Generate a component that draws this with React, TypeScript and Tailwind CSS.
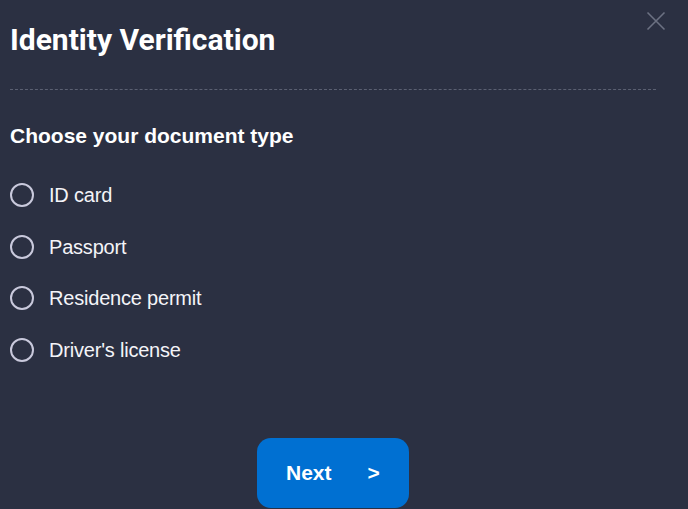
import React from "react";

const options = ["ID card", "Passport", "Residence permit", "Driver's license"];

export default function App() {
  return (
    <div className="relative w-[688px] h-[509px] overflow-hidden bg-[#2b3042]">
      <button className="absolute left-[646px] top-[11px] w-[20px] h-[20px]" aria-label="Close">
        <svg width="20" height="20" viewBox="0 0 20 20" fill="none">
          <path d="M1.5 1.5 L18.5 18.5 M18.5 1.5 L1.5 18.5" stroke="#6c7182" strokeWidth="1.6" />
        </svg>
      </button>
      <div className="ml-[10px] w-[646px] flex flex-col">
        <h1 className="pt-[22px] text-[30px] leading-[36px] font-bold text-white font-['Roboto',sans-serif]">
          Identity Verification
        </h1>
        <div className="mt-[31px] border-t border-dashed border-[#5b6072]" />
        <h2 className="mt-[34px] text-[21px] leading-[24px] font-bold text-white font-['Liberation_Sans',Arial,sans-serif]">
          Choose your document type
        </h2>
        <div className="mt-[21px] flex flex-col">
          {options.map((o) => (
            <label key={o} className="h-[51.7px] flex items-center">
              <span className="w-6 h-6 rounded-full border-2 border-[#c9c9dc]" />
              <span className="ml-[15px] text-[20px] leading-[24px] tracking-[-0.2px] text-[#f4f4f8] font-['Liberation_Sans',Arial,sans-serif]">
                {o}
              </span>
            </label>
          ))}
        </div>
        <div className="mt-[62px] flex justify-center">
          <button className="w-[152px] h-[70px] rounded-[14px] bg-[#0070d2] flex items-center pl-[29px] text-white text-[21px] font-bold font-['Liberation_Sans',Arial,sans-serif]">
            <span>Next</span>
            <span className="ml-[36px]">&gt;</span>
          </button>
        </div>
      </div>
    </div>
  );
}
